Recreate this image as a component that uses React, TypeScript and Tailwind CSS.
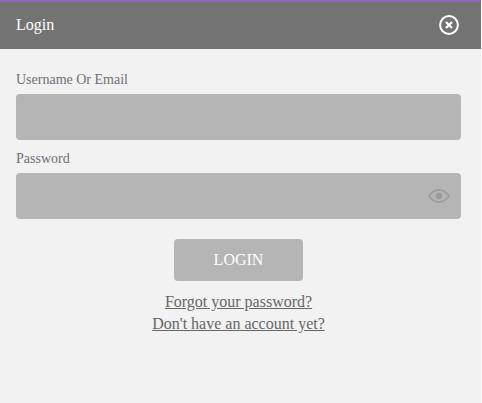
import React from "react";

const CloseIcon = () => (
  <svg viewBox="0 0 20 20" className="w-5 h-5" fill="none" stroke="white">
    <circle cx="10" cy="10" r="8.9" strokeWidth="2" />
    <path d="M7 7l6 6M13 7l-6 6" strokeWidth="2.2" />
  </svg>
);

const EyeIcon = () => (
  <svg viewBox="0 0 22 14" className="w-[22px] h-[14px]" fill="none">
    <path
      d="M1 7C4 2.8 7.400 1 11 1s7 1.800 10 6c-3 4.200-6.400 6-10 6S4 11.200 1 7z"
      stroke="#9e9e9e"
      strokeWidth="2"
    />
    <circle cx="11" cy="7" r="3.2" fill="#9a9a9a" />
  </svg>
);

export default function App() {
  return (
    <div className="h-[403px] w-[481px] bg-[#f2f2f2] font-['Liberation_Serif',serif]">
      <header className="h-[49px] bg-[#737373] border-t-2 border-[#8e67b8] flex items-center justify-between pb-px pl-4 pr-[22px]">
        <h1 className="text-white text-base">Login</h1>
        <CloseIcon />
      </header>
      <form className="pl-4 pr-[20px] pt-[21px]">
        <label className="block text-[#6f6f75] text-sm leading-[20px] mb-1">
          Username Or Email
        </label>
        <div className="h-[46px] bg-[#b5b5b5] rounded" />
        <label className="block text-[#6f6f75] text-sm leading-[20px] mt-[9px] mb-1">
          Password
        </label>
        <div className="h-[46px] bg-[#b5b5b5] rounded flex items-center justify-end pr-[11px]">
          <EyeIcon />
        </div>
        <div className="flex flex-col items-center mt-5">
          <button
            type="button"
            className="w-[129px] h-[42px] bg-[#b5b5b5] rounded text-white text-base"
          >
            LOGIN
          </button>
          <a className="mt-[10px] text-[#666] underline text-base leading-[22px]">
            Forgot your password?
          </a>
          <a className="text-[#666] underline text-base leading-[22px]">
            Don't have an account yet?
          </a>
        </div>
      </form>
    </div>
  );
}
